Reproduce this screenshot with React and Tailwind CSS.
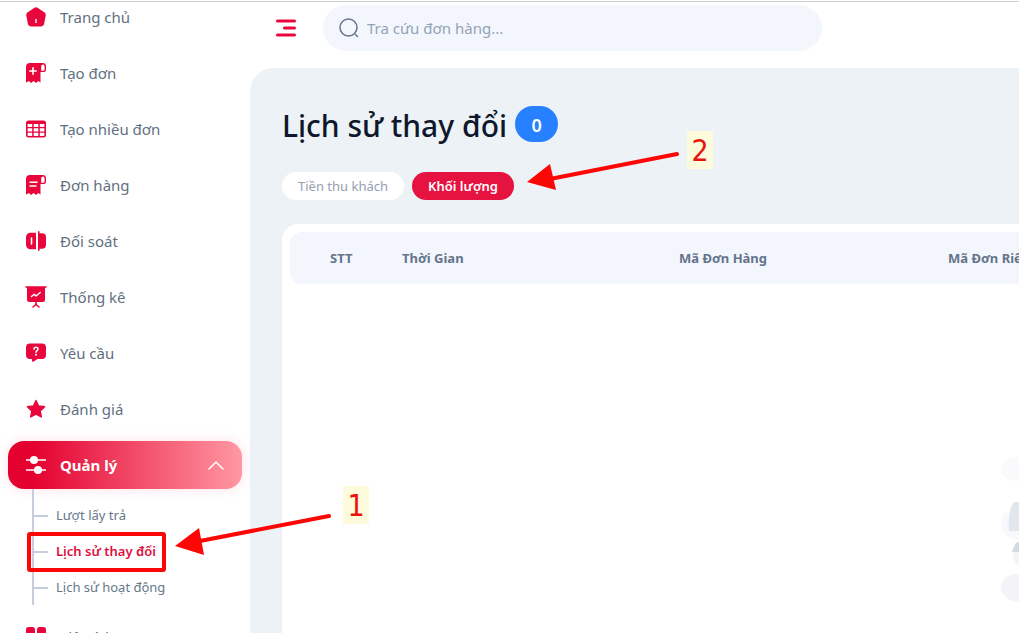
import clsx from "clsx";

const navItems = [
    { label: "Trang chủ", Icon: HomeIcon },
    { label: "Tạo đơn", Icon: CreateIcon },
    { label: "Tạo nhiều đơn", Icon: GridIcon },
    { label: "Đơn hàng", Icon: OrderIcon },
    { label: "Đối soát", Icon: CompareIcon },
    { label: "Thống kê", Icon: StatsIcon },
    { label: "Yêu cầu", Icon: RequestIcon },
    { label: "Đánh giá", Icon: StarIcon },
];

const subItems = ["Lượt lấy trả", "Lịch sử thay đổi", "Lịch sử hoạt động"];

function HomeIcon() {
    return (
        <svg width="20" height="20" viewBox="0 0 20 20">
            <path d="M8.400.8a2.800 2.800 0 0 1 3.200 0l7 4.800c.9.6 1.300 1.700 1.100 2.800l-1.500 8.200A3.600 3.600 0 0 1 14.700 19.500H5.300a3.600 3.600 0 0 1-3.500-2.900L.3 8.400c-.2-1.100.2-2.200 1.100-2.800z" fill="currentColor" />
            <path d="M10 12.500v3" stroke="#fff" strokeWidth="1.400" strokeLinecap="round" />
        </svg>
    );
}

function Receipt({ children }) {
    return (
        <svg width="20" height="20" viewBox="0 0 20 20" fill="none">
            <path d="M4 0h13.500L14.500 3v16.500l-2.300-1.600-2.200 2.100L7.600 18l-2.500 2-2.300-1.900L0 19.800V4a4 4 0 0 1 4-4z" fill="currentColor" />
            <path d="M14.500 8.400V3.500c0-1.700 1-2.800 2.400-2.800s2.400 1.100 2.400 2.800v2.700c0 1.300-.8 2.200-2.200 2.200z" fill="#fff" stroke="currentColor" strokeWidth="1.400" />
            {children}
        </svg>
    );
}

function CreateIcon() {
    return (
        <Receipt>
            <path d="M7 4.800v6.400M3.800 8h6.400" stroke="#fff" strokeWidth="1.600" strokeLinecap="round" />
        </Receipt>
    );
}

function OrderIcon() {
    return (
        <Receipt>
            <path d="M4 7.200h7M4 11h6" stroke="#fff" strokeWidth="1.500" strokeLinecap="round" />
        </Receipt>
    );
}

function GridIcon() {
    return (
        <svg width="20" height="20" viewBox="0 0 20 20">
            <rect y="1.500" width="20" height="17" rx="2.500" fill="currentColor" />
            <g fill="#fff">
                <path d="M1.600 5h4.600v3H1.600zM7.700 5h4.600v3H7.700zM13.800 5h4.600v3h-4.600z" />
                <path d="M1.600 9.300h4.600v3.200H1.600zM7.700 9.300h4.600v3.200H7.700zM13.800 9.300h4.600v3.200h-4.600z" />
                <path d="M1.600 13.800h4.600v3.100H2.600a1 1 0 0 1-1-1zM7.700 13.800h4.600v3.100H7.700zM13.800 13.800h4.600v2.100a1 1 0 0 1-1 1h-3.600z" />
            </g>
        </svg>
    );
}

function CompareIcon() {
    return (
        <svg width="20" height="20" viewBox="0 0 20 20" fill="none">
            <path d="M4.500 1.800H10v16.400H4.500A4.500 4.500 0 0 1 0 13.700V6.300a4.500 4.500 0 0 1 4.500-4.500z" fill="currentColor" />
            <path d="M12.800.8v18.400" stroke="currentColor" strokeWidth="1.600" strokeLinecap="round" />
            <path d="M13 2.200h3a4 4 0 0 1 4 4v7.600a4 4 0 0 1-4 4h-3z" fill="currentColor" />
            <path d="M5.500 7v6" stroke="#fff" strokeWidth="1.600" strokeLinecap="round" />
        </svg>
    );
}

function StatsIcon() {
    return (
        <svg width="22" height="22" viewBox="0 0 22 22" fill="none" className="-mx-px">
            <path d="M2 1h18v12.500a2.500 2.500 0 0 1-2.500 2.500h-13A2.500 2.500 0 0 1 2 13.500z" fill="currentColor" />
            <path d="M1 1h20M11 16v3M8 21l3-2.500 3 2.500" stroke="currentColor" strokeWidth="1.600" strokeLinecap="round" />
            <path d="M6.500 10.500l2.700-2.300 1.800 1.800 4.200-3.500" stroke="#fff" strokeWidth="1.500" strokeLinecap="round" strokeLinejoin="round" />
        </svg>
    );
}

function RequestIcon() {
    return (
        <svg width="20" height="20" viewBox="0 0 20 20" fill="none">
            <path d="M4 .5h12a4 4 0 0 1 4 4V12a4 4 0 0 1-4 4h-4.500L7.300 18.700c-.6.400-1.300 0-1.300-.7v-2H4a4 4 0 0 1-4-4V4.500a4 4 0 0 1 4-4z" fill="currentColor" />
            <path d="M8 6.200c0-1.300.9-2 2-2s2 .8 2 1.900c0 1.500-2 1.500-2 3.200" stroke="#fff" strokeWidth="1.500" strokeLinecap="round" />
            <circle cx="10" cy="11.800" r="1" fill="#fff" />
        </svg>
    );
}

function StarIcon() {
    return (
        <svg width="20" height="20" viewBox="0 0 20 20">
            <path d="M10 1.500l2.600 5.500 6 .8-4.400 4.200 1.100 6L10 15.100 4.700 18l1.100-6L1.400 7.800l6-.8z" fill="currentColor" stroke="currentColor" strokeWidth="1.400" strokeLinejoin="round" />
        </svg>
    );
}

function SlidersIcon() {
    return (
        <svg width="20" height="20" viewBox="0 0 20 20" fill="none">
            <path d="M0 5h20M0 15h20" stroke="currentColor" strokeWidth="1.500" />
            <circle cx="8" cy="5" r="4" fill="currentColor" />
            <circle cx="12" cy="15" r="4" fill="currentColor" />
        </svg>
    );
}

function AppsIcon() {
    return (
        <svg width="20" height="20" viewBox="0 0 20 20" fill="currentColor">
            <rect width="9" height="9" rx="2.500" />
            <rect x="11" width="9" height="9" rx="2.500" />
            <rect y="11" width="9" height="9" rx="2.500" />
            <rect x="11" y="11" width="9" height="9" rx="2.500" />
        </svg>
    );
}

function NavLink({ label, Icon }) {
    return (
        <a href="#" className="flex h-12 items-center gap-[14px] px-[18px] text-[#5f7080]">
            <span className="text-[#e8063c]"><Icon /></span>
            {label}
        </a>
    );
}

function Sidebar() {
    return (
        <aside className="w-[250px] shrink-0 overflow-hidden px-2">
            <nav className="-mt-[9px] flex flex-col gap-2 text-[15px]">
                {navItems.map((item) => <NavLink key={item.label} {...item} />)}
                <div>
                    <button className="flex h-12 w-full items-center gap-[14px] rounded-2xl bg-linear-to-r/srgb from-[#e4002f] from-10% to-[#ff98a3] px-[18px] font-bold text-white shadow-[0_0_12px_#ff5c7c33]">
                        <SlidersIcon />
                        Quản lý
                        <svg width="16" height="9" viewBox="0 0 16 9" fill="none" className="ml-auto">
                            <path d="M1 8l7-7 7 7" stroke="currentColor" strokeWidth="1.500" strokeLinecap="round" strokeLinejoin="round" />
                        </svg>
                    </button>
                    <ul className="ml-6 border-l-2 border-[#c6cfdb] pt-2 text-[13px]">
                        {subItems.map((label, i) => (
                            <li key={label}>
                                <a
                                    href="#"
                                    className={clsx("flex h-9 items-center gap-2 pt-px", i === 1 ? "font-semibold text-[#dc1040]" : "text-[#66788a]")}
                                >
                                    <span className="w-[14px] border-t-2 border-[#c6cfdb]" />
                                    {label}
                                </a>
                            </li>
                        ))}
                    </ul>
                </div>
                <NavLink label="Tiện ích" Icon={AppsIcon} />
            </nav>
        </aside>
    );
}

function Header() {
    return (
        <header className="flex h-[66px] items-start gap-[27px] pt-[3px] pl-[26px]">
            <button aria-label="Menu" className="flex h-[46px] items-center text-[#e8063c]">
                <svg width="20" height="18" viewBox="0 0 20 18" stroke="currentColor" strokeWidth="3" strokeLinecap="round">
                    <path d="M1.500 2h17M8.500 9h10M1.500 16h17" />
                </svg>
            </button>
            <label className="flex h-[46px] w-[499px] items-center gap-2 rounded-full bg-[#f3f6fc] px-4">
                <svg width="20" height="20" viewBox="0 0 20 20" fill="none" stroke="#64748b" strokeWidth="1.500" strokeLinecap="round">
                    <circle cx="9.500" cy="9.500" r="8.500" />
                    <path d="M16.500 16.500l2 2" />
                </svg>
                <input
                    type="text"
                    aria-label="Tra cứu đơn hàng"
                    placeholder="Tra cứu đơn hàng..."
                    className="flex-1 text-[15px] outline-none placeholder:text-[#94a3b8]"
                />
            </label>
        </header>
    );
}

function EmptyArt() {
    return (
        <svg width="20" height="152" viewBox="0 0 20 152" fill="none">
            <path d="M20 3C9 4 2 9 2 16s5 10 18 11z" fill="#f8fafb" />
            <path d="M20 58H6c-5 6-5 20 2 24l12 5z" fill="#f8f9fc" />
            <path d="M20 48h-5c-5 6-6 18-5 29h10z" fill="#e2e7ee" />
            <path d="M20 88c-3 0-5 3-7 10h7z" fill="#d5dbe3" />
            <path d="M20 98h-6c0 7 2 12 6 14z" fill="#f3f5f9" />
            <path d="M20 120C8 119 2 126 2 133s6 15 18 14z" fill="#f3f4f7" />
        </svg>
    );
}

function HistoryTable() {
    return (
        <section className="flex-1 overflow-hidden rounded-tl-2xl bg-white pt-2 pl-2">
            <table className="w-[1150px] table-fixed border-separate border-spacing-0 rounded-xl bg-[#f3f6fc]">
                <colgroup>
                    <col className="w-[112px]" />
                    <col className="w-[277px]" />
                    <col className="w-[269px]" />
                    <col />
                </colgroup>
                <thead>
                    <tr className="h-[52px] text-left text-[13px] text-[#64748b]">
                        <th className="pt-0.5 pl-10">STT</th>
                        <th className="pt-0.5">Thời Gian</th>
                        <th className="pt-0.5">Mã Đơn Hàng</th>
                        <th className="pt-0.5">Mã Đơn Riêng</th>
                    </tr>
                </thead>
            </table>
            <div className="flex justify-end pt-[170px]">
                <EmptyArt />
            </div>
        </section>
    );
}

function Annotations() {
    return (
        <div className="pointer-events-none absolute inset-0">
            <svg width="720" height="600" viewBox="0 0 720 600" fill="none" stroke="#fd0606" strokeWidth="4" strokeLinecap="round">
                <rect x="29" y="534" width="135" height="36" rx="1" />
                <path d="M329 516L200 541M677 154L550 179" />
                <path d="M175 546l24-18 5 27zM527 182l23-18 6 26z" fill="#fd0606" stroke="none" />
            </svg>
            <span className="absolute top-[131px] left-[687px] flex h-[38px] w-[26px] items-center justify-center bg-[#fdfbdc] font-['DejaVu_Sans_Condensed','DejaVu_Sans',sans-serif] text-[30px] text-[#e8130c]">2</span>
            <span className="absolute top-[486px] left-[343px] flex h-[38px] w-[26px] items-center justify-center bg-[#fdfbdc] font-['DejaVu_Sans_Condensed','DejaVu_Sans',sans-serif] text-[30px] text-[#e8130c]">1</span>
        </div>
    );
}

export default function App() {
    return (
        <div className="relative flex h-screen flex-col overflow-hidden bg-white font-['Noto_Sans',sans-serif]">
            <div className="h-0.5 shrink-0 border-b border-[#cdd1d1]" />
            <div className="flex min-h-0 flex-1">
                <Sidebar />
                <div className="flex min-w-0 flex-1 flex-col">
                    <Header />
                    <main className="flex min-h-0 flex-1 flex-col rounded-tl-3xl bg-[#ecf2f6] pt-[38px] pl-8">
                        <div className="flex items-center gap-2">
                            <h1 className="pt-1 text-[30px] leading-8 font-medium text-[#0f172a]">Lịch sử thay đổi</h1>
                            <span className="flex h-9 w-[43px] items-center justify-center rounded-full bg-[#2680ff] pt-px text-lg font-semibold text-white">0</span>
                        </div>
                        <div className="mt-[30px] mb-6 flex gap-2 text-[13px]">
                            <button className="h-7 rounded-full bg-white px-4 pt-px text-[#94a0b0]">Tiền thu khách</button>
                            <button className="h-7 rounded-full bg-[#e6123f] px-4 pt-px font-semibold text-white">Khối lượng</button>
                        </div>
                        <HistoryTable />
                    </main>
                </div>
            </div>
            <Annotations />
        </div>
    );
}
